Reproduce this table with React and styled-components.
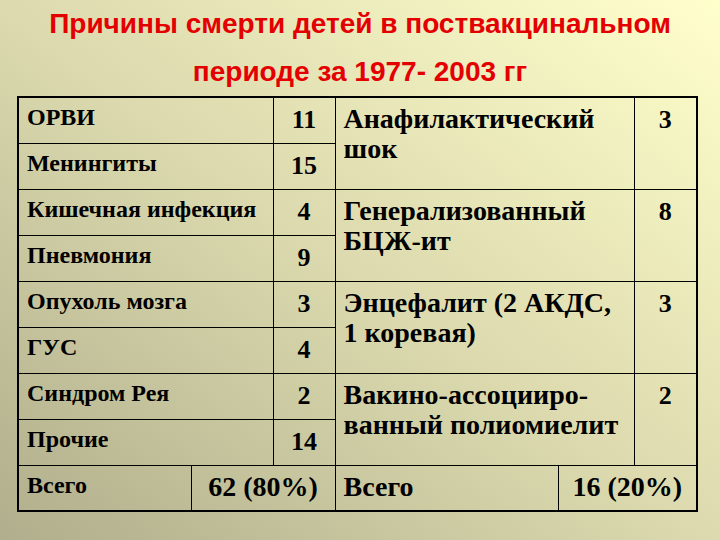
import React from 'react'
import styled, { createGlobalStyle } from 'styled-components'

const GlobalStyle = createGlobalStyle`
  html, body {
    margin: 0;
    padding: 0;
  }
`

const Slide = styled.div`
  width: 720px;
  height: 540px;
  overflow: hidden;
  background: linear-gradient(to top right, #b0ae8c 0%, #dcdaae 50%, #ffffcc 100%);
  font-family: 'Liberation Serif', 'Times New Roman', serif;
  color: #000;
`

const Title = styled.h1`
  margin: 0;
  height: 96px;
  font-family: 'Liberation Sans', Arial, sans-serif;
  font-weight: 700;
  font-size: 28px;
  line-height: 48px;
  text-align: center;
  color: #e40000;
`

const Table = styled.table`
  margin-left: 17px;
  width: 679px;
  table-layout: fixed;
  border-collapse: collapse;
  border: 2px solid #000;
`

const Row = styled.tr`
  height: 46px;
`

const Cell = styled.td`
  border: 1px solid #000;
  vertical-align: top;
  padding: 6px 8px 0;
  font-weight: 700;
  font-size: ${p => (p.$big ? '28px' : '24px')};
  line-height: ${p => (p.$big ? '30px' : '1.15')};
  white-space: nowrap;
`

const Num = styled.td`
  border: 1px solid #000;
  vertical-align: top;
  padding: ${p => (p.$total ? '5px 0 0' : '7px 0 0')};
  text-align: center;
  font-weight: 700;
  font-size: ${p => (p.$total ? '28px' : '26px')};
  line-height: 1.15;
  white-space: nowrap;
`

const left = [
  ['ОРВИ', 11],
  ['Менингиты', 15],
  ['Кишечная инфекция', 4],
  ['Пневмония', 9],
  ['Опухоль мозга', 3],
  ['ГУС', 4],
  ['Синдром Рея', 2],
  ['Прочие', 14],
]

const right = [
  [['Анафилактический', 'шок'], 3],
  [['Генерализованный', 'БЦЖ-ит'], 8],
  [['Энцефалит (2 АКДС,', '1 коревая)'], 3],
  [['Вакино-ассоцииро-', 'ванный полиомиелит'], 2],
]

export default function App() {
  return (
    <Slide>
      <GlobalStyle />
      <Title>
        Причины смерти детей в поствакцинальном
        <br />
        периоде за 1977- 2003 гг
      </Title>
      <Table>
        <colgroup>
          <col style={{ width: 173 }} />
          <col style={{ width: 82 }} />
          <col style={{ width: 62 }} />
          <col style={{ width: 223 }} />
          <col style={{ width: 76 }} />
          <col style={{ width: 63 }} />
        </colgroup>
        <tbody>
          {left.map(([name, n], i) => (
            <Row key={name}>
              <Cell colSpan={2}>{name}</Cell>
              <Num>{n}</Num>
              {i % 2 === 0 && (
                <>
                  <Cell colSpan={2} rowSpan={2} $big>
                    {right[i / 2][0][0]}
                    <br />
                    {right[i / 2][0][1]}
                  </Cell>
                  <Num rowSpan={2}>{right[i / 2][1]}</Num>
                </>
              )}
            </Row>
          ))}
          <Row>
            <Cell>Всего</Cell>
            <Num colSpan={2} $total>62 (80%)</Num>
            <Cell $big>Всего</Cell>
            <Num colSpan={2} $total>16 (20%)</Num>
          </Row>
        </tbody>
      </Table>
    </Slide>
  )
}
